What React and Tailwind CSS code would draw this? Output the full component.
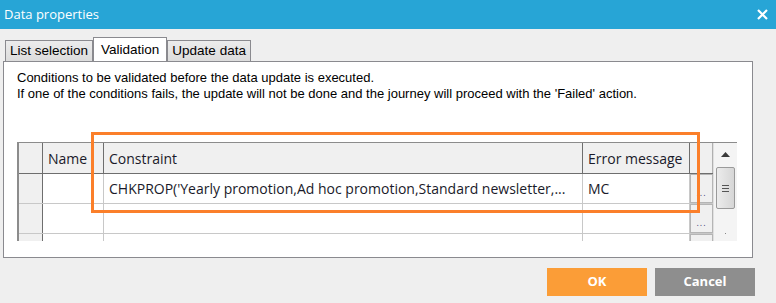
import React from 'react';

const ui = { fontFamily: '"Open Sans", "Noto Sans", sans-serif' };
const classic = { fontFamily: '"Liberation Sans", Arial, sans-serif' };

const Tab = ({ label, active }) => (
  <div
    className={
      active
        ? 'relative z-10 h-[24px] -mb-px px-[7px] pt-[2px] bg-white border border-b-0 border-[#8a8a8f] text-[13.5px] text-black'
        : 'h-[21px] mt-[3px] px-[4px] bg-gradient-to-b from-[#ececec] to-[#dcdcdc] border border-b-0 border-[#8a8a8f] text-[13.5px] text-black leading-[20px]'
    }
    style={classic}
  >
    {label}
  </div>
);

const DotsButton = ({ dots = true }) => (
  <div className="h-full w-full bg-[#f0f0f0] border border-[#b5b5b5] flex items-end justify-center pb-[5px]">
    {dots && <span className="text-[9px] leading-none tracking-[1px] text-[#44447a]">...</span>}
  </div>
);

export default function App() {
  return (
    <div className="w-[776px] h-[303px] bg-[#efefef] flex flex-col overflow-hidden" style={ui}>
      {/* Title bar */}
      <div className="h-[29px] bg-[#27a5d6] flex items-center justify-between pl-[4px] pr-[8px] shrink-0">
        <span className="text-[13px] text-white">Data properties</span>
        <svg width="11" height="11" viewBox="0 0 11 11" className="text-white">
          <path d="M1 1L10 10M10 1L1 10" stroke="currentColor" strokeWidth="2.2" />
        </svg>
      </div>

      {/* Tabs */}
      <div className="flex pl-[5px] pt-[8px] shrink-0">
        <Tab label="List selection" />
        <Tab label="Validation" active />
        <Tab label="Update data" />
      </div>

      {/* Panel */}
      <div className="relative ml-[3px] w-[750px] h-[197px] shrink-0 bg-white border border-[#8a8a8f] pl-[13px] pt-[8px]">
        <div className="text-[13px] leading-[16px] text-black" style={classic}>
          <p>Conditions to be validated before the data update is executed.</p>
          <p>If one of the conditions fails, the update will not be done and the journey will proceed with the 'Failed' action.</p>
        </div>

        {/* Grid */}
        <div className="mt-[40px] w-[720px] h-[99px] flex border-t border-l-2 border-[#8c8c8c] overflow-hidden">
          <div className="flex-1 flex flex-col text-[14px] text-[#1a1a2a]">
            <div className="flex h-[31px] bg-[#f0f0f0] border-b border-[#6e6e6e] shrink-0">
              <div className="w-[24px] border-r border-[#6e6e6e]" />
              <div className="w-[61px] border-r border-[#6e6e6e] pl-[5px] flex items-center">Name</div>
              <div className="w-[479px] border-r border-[#6e6e6e] pl-[5px] flex items-center">Constraint</div>
              <div className="w-[107px] border-r border-[#6e6e6e] pl-[5px] flex items-center">Error message</div>
              <div className="w-[23px] border-r border-[#b0b0b0]" />
            </div>
            {[0, 1, 2].map(i => (
              <div key={i} className="flex h-[30px] border-b border-[#c8c8c8] shrink-0">
                <div className="w-[24px] bg-[#f0f0f0] border-r border-[#6e6e6e]" />
                <div className="w-[61px] border-r border-[#c8c8c8]" />
                <div className="w-[479px] border-r border-[#c8c8c8] pl-[5px] flex items-center whitespace-nowrap overflow-hidden">
                  {i === 0 ? "CHKPROP('Yearly promotion,Ad hoc promotion,Standard newsletter,..." : ''}
                </div>
                <div className="w-[107px] border-r border-[#c8c8c8] pl-[5px] flex items-center">
                  {i === 0 ? 'MC' : ''}
                </div>
                <div className="w-[23px]">
                  <DotsButton dots={i < 2} />
                </div>
              </div>
            ))}
          </div>

          {/* Scrollbar */}
          <div className="w-[24px] bg-[#f4f4f4] border-l border-[#e0e0e0] flex flex-col items-center pt-[9px]">
            <svg width="9" height="5" viewBox="0 0 9 5">
              <path d="M4.5 0L9 5H0z" fill="#3a3a3a" />
            </svg>
            <div className="mt-[10px] w-[19px] h-[42px] rounded-[2px] border border-[#9a9a9a] bg-gradient-to-r from-[#ececec] to-[#d6d6d6] flex flex-col items-center justify-center gap-[2px]">
              <div className="w-[7px] h-px bg-[#555]" />
              <div className="w-[7px] h-px bg-[#555]" />
              <div className="w-[7px] h-px bg-[#555]" />
            </div>
            <div className="mt-[24px] w-px h-px bg-[#888]" />
          </div>
        </div>

        {/* Highlight frame */}
        <div className="absolute left-[87px] top-[70px] w-[609px] h-[81px] border-[3px] border-[#fb7f2a]" />
      </div>

      {/* Buttons */}
      <div className="flex justify-end gap-[8px] pr-[21px] pt-[10px] shrink-0">
        <button className="w-[100px] h-[28px] bg-[#fb9d37] text-white text-[13px] font-bold">OK</button>
        <button className="w-[100px] h-[28px] bg-[#8e8e8e] text-white text-[13px] font-bold">Cancel</button>
      </div>
    </div>
  );
}
